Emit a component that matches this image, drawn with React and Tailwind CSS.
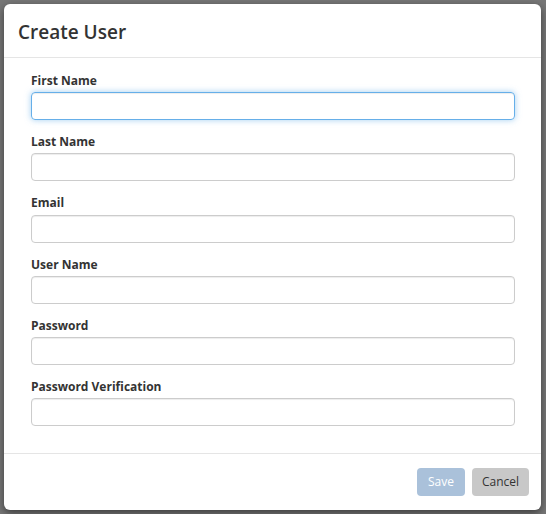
import React from 'react';

const fields = [
  { label: 'First Name', type: 'text', focus: true },
  { label: 'Last Name', type: 'text' },
  { label: 'Email', type: 'email' },
  { label: 'User Name', type: 'text' },
  { label: 'Password', type: 'password' },
  { label: 'Password Verification', type: 'password' },
];

function App() {
  return (
    <div
      className="w-[546px] h-[514px] bg-[#777777] p-[4px] pr-[5px] overflow-hidden"
      style={{ fontFamily: '"Open Sans", "Liberation Sans", sans-serif' }}
    >
      <div className="w-[537px] h-[506px] bg-white rounded-[6px] shadow-[0_3px_9px_rgba(0,0,0,0.5)] flex flex-col">
        {/* Header */}
        <div className="h-[54px] px-[14px] pt-[4px] flex items-center border-b border-[#e5e5e5]">
          <h4 className="text-[19px] font-semibold text-[#333] leading-none">Create User</h4>
        </div>

        {/* Body */}
        <div className="flex-1 px-[27px] pt-[14px]">
          {fields.map((f) => (
            <div key={f.label} className="mb-[13px]">
              <label className="block text-[12px] font-bold text-[#333] leading-[17.2px] mb-[3px]">
                {f.label}
              </label>
              <input
                type={f.type}
                className={
                  'block w-[484px] h-[28px] rounded-[4px] border px-[10px] text-[12px] text-[#555] outline-none ' +
                  (f.focus
                    ? 'border-[#66afe9] shadow-[inset_0_1px_1px_rgba(0,0,0,0.075),0_0_6px_rgba(102,175,233,0.6)]'
                    : 'border-[#cccccc] shadow-[inset_0_1px_1px_rgba(0,0,0,0.075)]')
                }
              />
            </div>
          ))}
        </div>

        {/* Footer */}
        <div className="h-[57px] border-t border-[#e5e5e5] flex justify-end items-start pt-[14px] pr-[12px] gap-[7px]">
          <button className="w-[48px] h-[28px] rounded-[4px] bg-[#aac1da] text-white text-[12px]">
            Save
          </button>
          <button className="w-[57px] h-[28px] rounded-[4px] bg-[#c8c8c8] text-[#333] text-[12px]">
            Cancel
          </button>
        </div>
      </div>
    </div>
  );
}

export default App;
